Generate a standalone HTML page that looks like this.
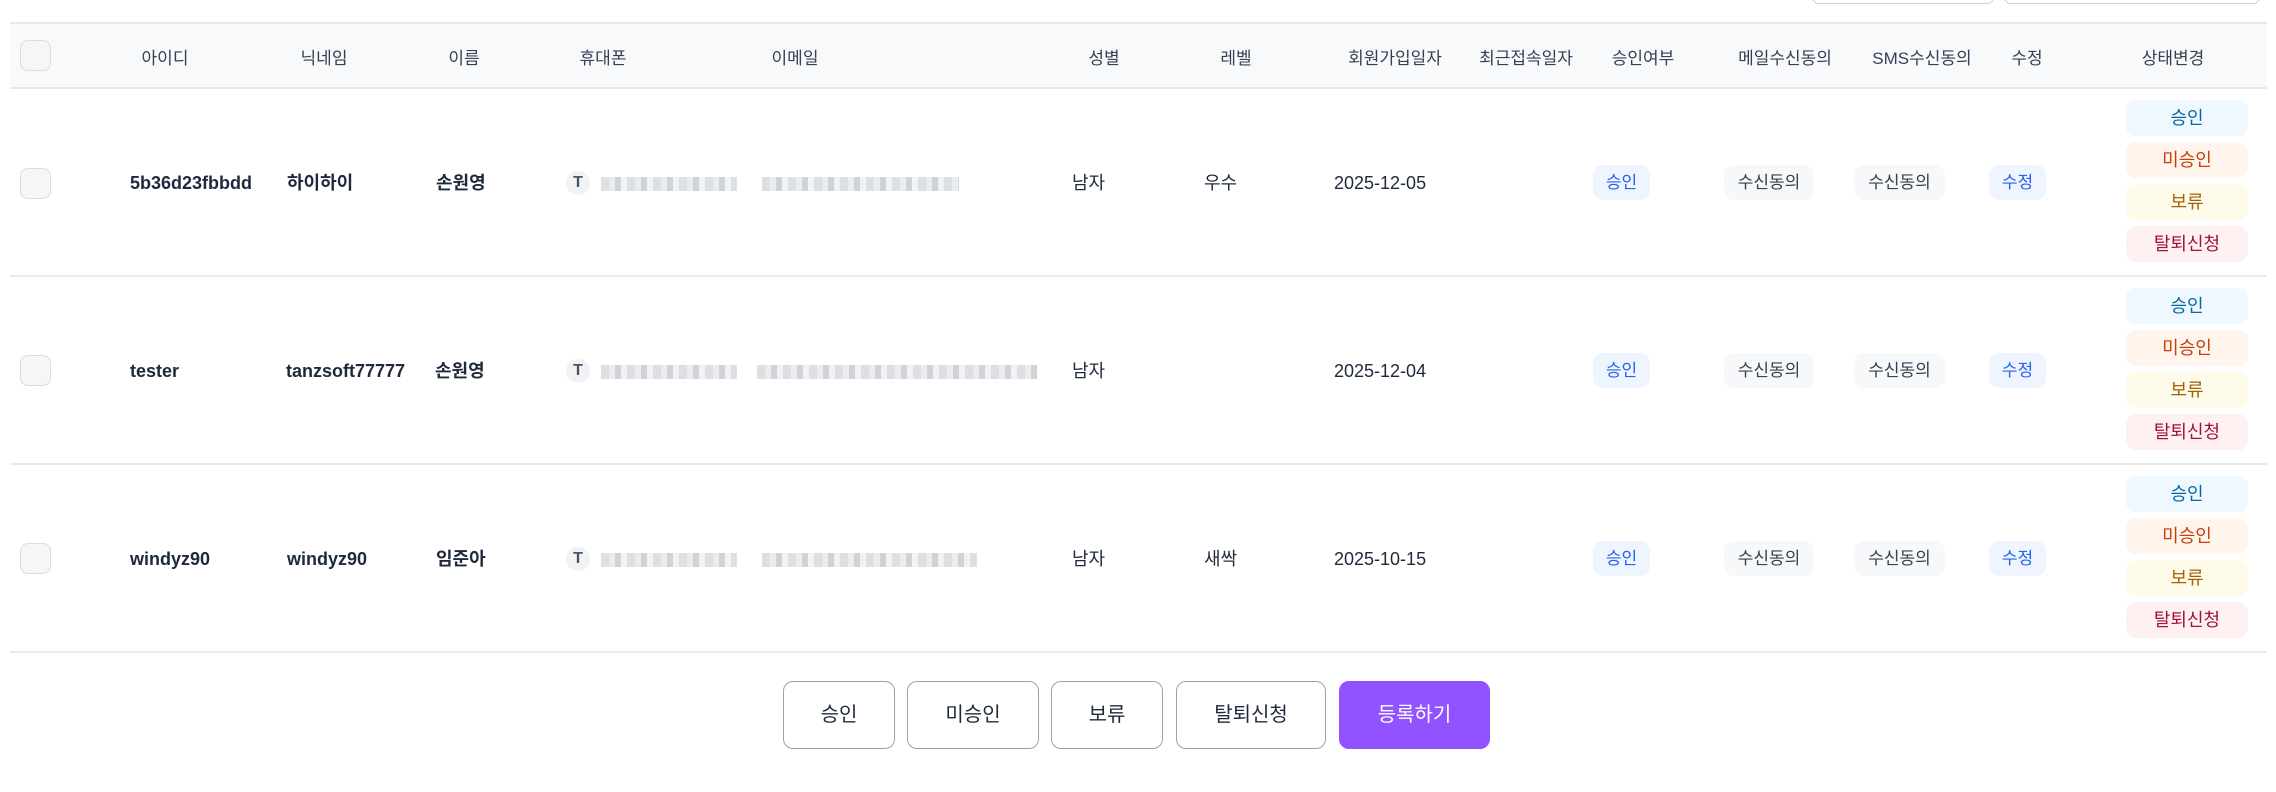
<!DOCTYPE html>
<html><head><meta charset="utf-8"><style>
*{box-sizing:border-box;margin:0;padding:0}
body{width:2276px;height:792px;background:#fff;font-family:"Liberation Sans","Noto Sans CJK KR",sans-serif;color:#1e293b;position:relative;overflow:hidden}
.a{position:absolute;white-space:nowrap;line-height:30px;height:30px}
.hd{position:absolute;left:10px;width:2257px;top:22px;height:67px;background:#f8f9fb;border-top:2px solid #e5e7eb;border-bottom:2px solid #e5e7eb}
.line{position:absolute;left:10px;width:2257px;height:2px;background:#e9eaec}
.h{font-size:17px;color:#334155;top:44px;transform:translateX(-50%)}
.cb{position:absolute;left:20px;width:31px;height:31px;border:1.5px solid #dcdcdc;border-radius:8px;background:#f6f6f6}
.b{font-size:18px;font-weight:bold}
.n{font-size:18px;color:#1e293b}
.pill{position:absolute;height:35px;border-radius:10px;font-size:17px;display:flex;align-items:center;justify-content:center;line-height:1}
.st{position:absolute;left:2126px;width:122px;height:36px;border-radius:10px;font-size:18px;display:flex;align-items:center;justify-content:center;line-height:1}
.T{position:absolute;left:566px;width:24px;height:24px;border-radius:50%;background:#f1f2f4;font-size:16px;font-weight:bold;color:#475569;display:flex;align-items:center;justify-content:center}
.blur{position:absolute;height:14px;background:repeating-linear-gradient(90deg,#d6d9de 0 8px,#e6e8eb 8px 14px,#c8ccd2 14px 20px,#eef0f2 20px 26px);opacity:.85}
.btn{position:absolute;top:681px;height:68px;border:1.5px solid #9ca3af;border-radius:10px;font-size:20px;display:flex;align-items:center;justify-content:center;color:#1e293b;background:#fff;line-height:1}
</style></head><body>
<div style="position:absolute;left:1812px;top:-10px;width:182px;height:14px;border:1.5px solid #cfd3d8;border-radius:8px"></div>
<div style="position:absolute;left:2004px;top:-10px;width:256px;height:14px;border:1.5px solid #cfd3d8;border-radius:8px"></div>
<div class="hd"></div>
<div class="cb" style="top:40px"></div>
<div class="a h" style="left:165px">아이디</div>
<div class="a h" style="left:324px">닉네임</div>
<div class="a h" style="left:464px">이름</div>
<div class="a h" style="left:603px">휴대폰</div>
<div class="a h" style="left:795px">이메일</div>
<div class="a h" style="left:1104px">성별</div>
<div class="a h" style="left:1236px">레벨</div>
<div class="a h" style="left:1395px">회원가입일자</div>
<div class="a h" style="left:1526px">최근접속일자</div>
<div class="a h" style="left:1643px">승인여부</div>
<div class="a h" style="left:1785px">메일수신동의</div>
<div class="a h" style="left:1922px">SMS수신동의</div>
<div class="a h" style="left:2027px">수정</div>
<div class="a h" style="left:2173px">상태변경</div>

<div class="line" style="top:275px"></div>
<div class="line" style="top:463px"></div>
<div class="line" style="top:651px"></div>

<!-- row1 -->
<div class="cb" style="top:168px"></div>
<div class="a b" style="left:130px;top:168px">5b36d23fbbdd</div>
<div class="a b" style="left:287px;top:168px">하이하이</div>
<div class="a b" style="left:436px;top:168px">손원영</div>
<div class="T" style="top:171px">T</div>
<div class="blur" style="left:601px;top:177px;width:136px"></div>
<div class="blur" style="left:762px;top:177px;width:197px"></div>
<div class="a n" style="left:1072px;top:168px">남자</div>
<div class="a n" style="left:1204px;top:168px">우수</div>
<div class="a n" style="left:1334px;top:168px">2025-12-05</div>
<div class="pill" style="left:1593px;top:165px;width:57px;background:#eef5ff;color:#2563eb">승인</div>
<div class="pill" style="left:1724px;top:165px;width:90px;background:#f6f8fa;color:#374151">수신동의</div>
<div class="pill" style="left:1854px;top:165px;width:91px;background:#f6f8fa;color:#374151">수신동의</div>
<div class="pill" style="left:1989px;top:165px;width:57px;background:#eef5ff;color:#2563eb">수정</div>
<div class="st" style="top:100px;background:#eff7ff;color:#0369a1">승인</div>
<div class="st" style="top:142px;background:#fff5ed;color:#c2410c">미승인</div>
<div class="st" style="top:184px;background:#fffbeb;color:#a16207">보류</div>
<div class="st" style="top:226px;background:#fff1f2;color:#9f1239">탈퇴신청</div>

<!-- row2 -->
<div class="cb" style="top:355px"></div>
<div class="a b" style="left:130px;top:356px">tester</div>
<div class="a b" style="left:286px;top:356px">tanzsoft77777</div>
<div class="a b" style="left:435px;top:356px">손원영</div>
<div class="T" style="top:359px">T</div>
<div class="blur" style="left:601px;top:365px;width:136px"></div>
<div class="blur" style="left:757px;top:365px;width:280px"></div>
<div class="a n" style="left:1072px;top:356px">남자</div>
<div class="a n" style="left:1334px;top:356px">2025-12-04</div>
<div class="pill" style="left:1593px;top:353px;width:57px;background:#eef5ff;color:#2563eb">승인</div>
<div class="pill" style="left:1724px;top:353px;width:90px;background:#f6f8fa;color:#374151">수신동의</div>
<div class="pill" style="left:1854px;top:353px;width:91px;background:#f6f8fa;color:#374151">수신동의</div>
<div class="pill" style="left:1989px;top:353px;width:57px;background:#eef5ff;color:#2563eb">수정</div>
<div class="st" style="top:288px;background:#eff7ff;color:#0369a1">승인</div>
<div class="st" style="top:330px;background:#fff5ed;color:#c2410c">미승인</div>
<div class="st" style="top:372px;background:#fffbeb;color:#a16207">보류</div>
<div class="st" style="top:414px;background:#fff1f2;color:#9f1239">탈퇴신청</div>

<!-- row3 -->
<div class="cb" style="top:543px"></div>
<div class="a b" style="left:130px;top:544px">windyz90</div>
<div class="a b" style="left:287px;top:544px">windyz90</div>
<div class="a b" style="left:436px;top:544px">임준아</div>
<div class="T" style="top:547px">T</div>
<div class="blur" style="left:601px;top:553px;width:136px"></div>
<div class="blur" style="left:762px;top:553px;width:215px"></div>
<div class="a n" style="left:1072px;top:544px">남자</div>
<div class="a n" style="left:1204px;top:544px">새싹</div>
<div class="a n" style="left:1334px;top:544px">2025-10-15</div>
<div class="pill" style="left:1593px;top:541px;width:57px;background:#eef5ff;color:#2563eb">승인</div>
<div class="pill" style="left:1724px;top:541px;width:90px;background:#f6f8fa;color:#374151">수신동의</div>
<div class="pill" style="left:1854px;top:541px;width:91px;background:#f6f8fa;color:#374151">수신동의</div>
<div class="pill" style="left:1989px;top:541px;width:57px;background:#eef5ff;color:#2563eb">수정</div>
<div class="st" style="top:476px;background:#eff7ff;color:#0369a1">승인</div>
<div class="st" style="top:518px;background:#fff5ed;color:#c2410c">미승인</div>
<div class="st" style="top:560px;background:#fffbeb;color:#a16207">보류</div>
<div class="st" style="top:602px;background:#fff1f2;color:#9f1239">탈퇴신청</div>

<div class="btn" style="left:783px;width:112px">승인</div>
<div class="btn" style="left:907px;width:132px">미승인</div>
<div class="btn" style="left:1051px;width:112px">보류</div>
<div class="btn" style="left:1176px;width:150px">탈퇴신청</div>
<div class="btn" style="left:1339px;width:151px;background:#9152ff;border-color:#9152ff;color:#fff">등록하기</div>
</body></html>
